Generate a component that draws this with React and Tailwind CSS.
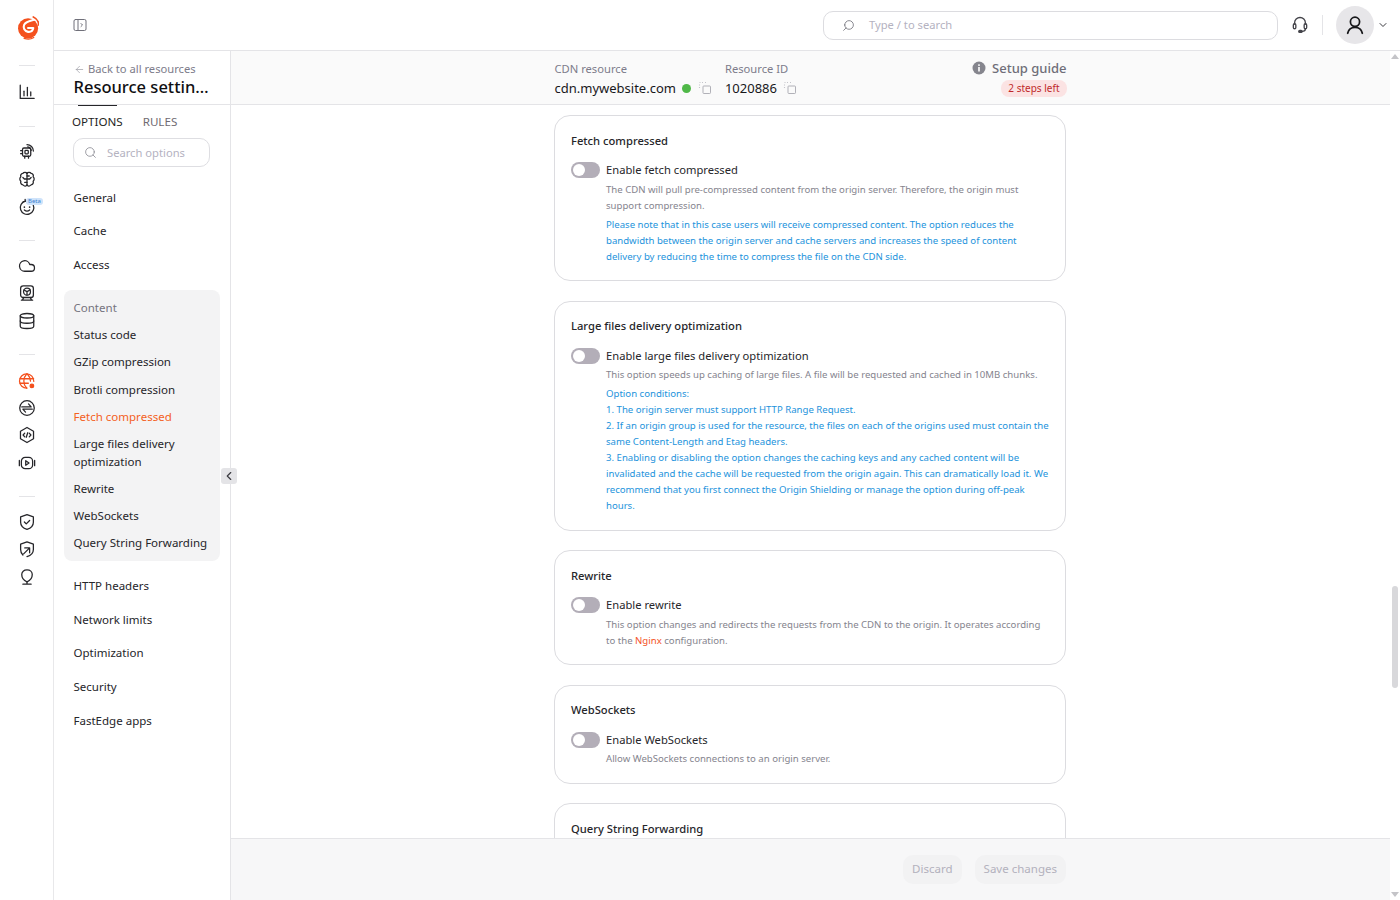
import React from 'react';
import { ArrowLeft, ChevronDown, ChevronLeft, Search, Cloud, Database } from 'lucide-react';

const Svg = ({ className = 'w-[18px] h-[18px] text-[#26262a]', children }) => (
  <svg viewBox="0 0 24 24" fill="none" stroke="currentColor" strokeWidth="1.7" strokeLinecap="round" strokeLinejoin="round" className={className}>
    {children}
  </svg>
);

const Logo = () => (
  <svg viewBox="0 0 24 28" className="w-[21px] h-[25px] ml-[4px]">
    <circle cx="11.500" cy="15" r="11.500" fill="#f4511e" />
    <path d="M19.500 4.500C17 6.500 9.500 6 7 11c-1.500 3.500.5 7.500 4.500 8 3 .3 5.500-1.500 6-4.500h-6" fill="none" stroke="#fff" strokeWidth="2.400" strokeLinecap="round" strokeLinejoin="round" />
    <path d="M17.500 2c3.500 1.500 6 4.500 6.200 9" fill="none" stroke="#f4511e" strokeWidth="2" strokeLinecap="round" />
    <path d="M7 26.500c3.500 1.200 8 1 11-1" fill="none" stroke="#f4511e" strokeWidth="1.500" strokeLinecap="round" />
  </svg>
);

const IconChart = () => (
  <Svg><path d="M3 3v17.500h18.500" /><path d="M8 11v6" /><path d="M12.500 6v11" /><path d="M17 12v5" /></Svg>
);
const IconChip = () => (
  <Svg>
    <rect x="6" y="8" width="11" height="11" rx="2" />
    <rect x="9.300" y="11.300" width="4.400" height="4.400" rx="1" />
    <path d="M3.500 11.500h2.500M3.500 15.500h2.500M9 21.500V19M14 21.500V19" />
    <path d="M12 3.500a8.500 8.500 0 0 1 8.500 8.500M13 6.400a5.600 5.600 0 0 1 4.600 4.600" />
  </Svg>
);
const IconBrain = () => (
  <Svg>
    <path d="M12 4.500v16" />
    <path d="M12 4.500C11 2.800 7.800 2.500 6.500 4.500 4 4.800 3 7 3.800 9 2 10.500 2 13.500 3.800 15c-.8 2.200.4 4.500 2.700 4.700 1.300 2 4.500 2.300 5.500.300" />
    <path d="M12 4.500c1-1.700 4.200-2 5.500 0 2.500.3 3.500 2.500 2.700 4.500 1.800 1.500 1.800 4.500 0 6 .8 2.200-.4 4.500-2.700 4.700-1.300 2-4.500 2.300-5.500.300" />
    <path d="M12 12H8.500L6.500 10M12 12h3.500l2-2M12 16.500H9M12 8h3" />
  </Svg>
);
const IconBeta = () => (
  <Svg>
    <path d="M9.500 4.200a9 9 0 1 0 10.800 5" />
    <path d="M9.500 1.800l.3 2.600-2.600.4" />
    <path d="M8.500 12v.2M15.500 12v.2" strokeWidth="2.200" />
    <path d="M8.500 16c2 1.600 5 1.600 7 0" />
  </Svg>
);
const IconMonitor = () => (
  <Svg>
    <rect x="3.500" y="2.500" width="17" height="15.500" rx="3.500" />
    <circle cx="12" cy="10.200" r="4.600" />
    <path d="M12 10.200v4.600M12 10.200l-4-2.200M12 10.200l4-2.200" />
    <path d="M6 21.500l1.500-3.500M18 21.500L16.500 18M4.500 21.500h15" />
  </Svg>
);
const IconGlobePin = () => (
  <Svg className="w-[18px] h-[18px] text-[#f4511e]">
    <path d="M21 12.500A9.500 9.500 0 1 0 12 21.500" />
    <path d="M2.800 9h18M2.800 15h11" />
    <path d="M11.500 2.600C6.500 8 6.500 16 11.500 21.400M12.500 2.600c2.800 3 4 6.200 4.200 9.600" />
    <circle cx="18.500" cy="18.500" r="2.400" fill="currentColor" />
  </Svg>
);
const IconSwap = () => (
  <Svg>
    <circle cx="12" cy="12" r="9.700" />
    <path d="M5 10.500h12.500l-3.500-4" />
    <path d="M19 13.500H6.500l3.500 4" />
  </Svg>
);
const IconCode = () => (
  <Svg>
    <path d="M12 2l8.700 5v10L12 22l-8.700-5V7z" />
    <path d="M9 9.500L6.800 12 9 14.500M15 9.500l2.200 2.500-2.200 2.500M13 9l-2 6" />
  </Svg>
);
const IconVideo = () => (
  <Svg>
    <rect x="4.500" y="4.500" width="15" height="15" rx="5" />
    <path d="M1.800 8.500v7M22.200 8.500v7" />
    <path d="M10.300 9l4.400 3-4.400 3z" />
  </Svg>
);
const IconShield = () => (
  <Svg>
    <path d="M12 2.200l8.500 3v7c0 4.800-3.600 8-8.500 9.600-4.900-1.600-8.500-4.800-8.500-9.600v-7z" />
    <path d="M8.500 12l2.500 2.500 4.500-4.500" />
  </Svg>
);
const IconShieldArrow = () => (
  <Svg>
    <path d="M6.500 20C4.500 18 3.500 15.500 3.500 12.500v-7l8.500-3 8.500 3v7c0 4.800-3.600 8-8.500 9.600" />
    <path d="M7.500 18.500l7-7M9 10.500h6.500V17" />
  </Svg>
);
const IconPin = () => (
  <Svg>
    <path d="M12 2.500c-4.200 0-7 2.500-7 6.300 0 4.500 3.200 8.200 7 9.700 3.800-1.500 7-5.200 7-9.700 0-3.800-2.800-6.300-7-6.300z" />
    <path d="M12 18.500v3M6.500 21.500h11" />
  </Svg>
);
const PanelIcon = () => (
  <svg viewBox="0 0 14 14" fill="none" stroke="#70707a" strokeWidth="1" strokeLinejoin="round" strokeLinecap="round" className="w-[14px] h-[14px]">
    <rect x="1" y="1.500" width="12" height="11" rx="1.500" />
    <path d="M5 1.500v11" />
    <path d="M8 5.500L9.500 7 8 8.500" />
  </svg>
);
const Headset = () => (
  <svg viewBox="0 0 24 24" fill="none" stroke="#44444a" strokeWidth="1.600" strokeLinecap="round" className="w-[20px] h-[20px]">
    <path d="M5.500 11V9.500a6.500 6.500 0 0 1 13 0V11" />
    <path d="M18.500 16.500c0 2-1.500 3.200-4 3.200" />
    <rect x="4" y="10.500" width="3" height="6" rx="1.500" />
    <rect x="17" y="10.500" width="3" height="6" rx="1.500" />
    <rect x="10.500" y="18.500" width="4" height="2.400" rx="1.200" fill="#44444a" />
  </svg>
);
const User = () => (
  <svg viewBox="0 0 24 24" fill="none" stroke="#18181b" strokeWidth="1.900" strokeLinecap="round" className="w-[22px] h-[22px]">
    <circle cx="12" cy="8.500" r="5" />
    <path d="M4 21c.8-4 4-6.500 8-6.500s7.200 2.500 8 6.500" />
  </svg>
);
const CopyIcon = () => (
  <svg viewBox="0 0 14 14" fill="none" stroke="#a8a8b0" strokeWidth="0.900" className="w-[14px] h-[14px]">
    <rect x="5" y="5" width="7.500" height="7.500" rx="0.800" />
    <path d="M1.500 1.500h1M4 1.500h1M7 1.500h1M1.500 3.500v1M1.500 6v1" stroke="#c4c4ca" strokeWidth="1.100" />
  </svg>
);
const InfoDot = () => (
  <svg viewBox="0 0 14 14" className="w-[14px] h-[14px] mr-[6px]">
    <circle cx="7" cy="7" r="6.500" fill="#85858d" />
    <rect x="6.200" y="6" width="1.600" height="4.500" fill="#fff" />
    <rect x="6.200" y="3.300" width="1.600" height="1.600" fill="#fff" />
  </svg>
);

const Divider = ({ className }) => <div className={`w-4 h-px bg-[#e4e4e7] shrink-0 ${className}`} />;
const RailIcon = ({ children, className = '' }) => (
  <div className={`relative w-[20px] h-[20px] flex items-center justify-center shrink-0 ${className}`}>{children}</div>
);

const Rail = () => (
  <aside className="w-[54px] shrink-0 h-full border-r border-[#e8e8ea] bg-white flex flex-col items-center pt-[15px]">
    <Logo />
    <Divider className="mt-[25px]" />
    <RailIcon className="mt-[16px]"><IconChart /></RailIcon>
    <Divider className="mt-[24px]" />
    <RailIcon className="mt-[14px]"><IconChip /></RailIcon>
    <RailIcon className="mt-[7.500px]"><IconBrain /></RailIcon>
    <RailIcon className="mt-[8px]">
      <IconBeta />
      <span className="absolute left-[9.500px] top-[1.500px] px-[2px] h-[7px] leading-[7px] text-[6px] rounded-[3px] bg-[#cfe3fa] text-[#3b7fd0]">Beta</span>
    </RailIcon>
    <Divider className="mt-[23px]" />
    <RailIcon className="mt-[15px]"><Cloud className="w-[18px] h-[18px] text-[#26262a]" strokeWidth={1.7} /></RailIcon>
    <RailIcon className="mt-[7px]"><IconMonitor /></RailIcon>
    <RailIcon className="mt-[8px]"><Database className="w-[18px] h-[18px] text-[#26262a]" strokeWidth={1.7} /></RailIcon>
    <Divider className="mt-[23px]" />
    <RailIcon className="mt-[16px]"><IconGlobePin /></RailIcon>
    <RailIcon className="mt-[7px]"><IconSwap /></RailIcon>
    <RailIcon className="mt-[7px]"><IconCode /></RailIcon>
    <RailIcon className="mt-[8px]"><IconVideo /></RailIcon>
    <Divider className="mt-[23px]" />
    <RailIcon className="mt-[15px]"><IconShield /></RailIcon>
    <RailIcon className="mt-[7px]"><IconShieldArrow /></RailIcon>
    <RailIcon className="mt-[8px]"><IconPin /></RailIcon>
  </aside>
);

const TopBar = () => (
  <header className="h-[51px] shrink-0 border-b border-[#e4e4e7] bg-white flex items-center pl-[19px] pr-[11px]">
    <PanelIcon />
    <div className="ml-auto w-[455px] h-[29px] rounded-[10px] border border-[#dcdce0] flex items-center pl-[18px]">
      <Search className="w-[13px] h-[13px] text-[#6f6f78] -scale-x-100" strokeWidth={1.500} />
      <span className="ml-[14px] pt-px text-[11.200px] text-[#b4b2bf]">Type / to search</span>
    </div>
    <div className="ml-[12px]"><Headset /></div>
    <div className="ml-[12px] w-px h-[20px] bg-[#e4e4e7]" />
    <div className="ml-[13px] w-[38px] h-[38px] rounded-full bg-[#e7e6e9] flex items-center justify-center"><User /></div>
    <ChevronDown className="ml-[3px] w-[12px] h-[12px] text-[#3a3a40]" strokeWidth={2} />
  </header>
);

const NavItem = ({ children, className = '' }) => (
  <div className={`px-[19.500px] text-[11.520px] leading-[18px] text-[#26262a] ${className}`}>{children}</div>
);
const SubItem = ({ children, className = 'text-[#26262a]' }) => (
  <div className={`pl-[9.500px] pr-1 text-[11.520px] leading-[18px] ${className}`}>{children}</div>
);

const SidePanel = () => (
  <aside className="relative w-[177px] shrink-0 h-full border-r border-[#e4e4e7] bg-white flex flex-col">
    <div className="h-[54px] shrink-0 pl-[19.500px] pt-[11px] border-b border-[#e4e4e7]">
      <div className="flex items-center text-[11.200px] leading-[14px] text-[#7d7c8a]">
        <ArrowLeft className="w-[11px] h-[11px] mr-[3.500px] text-[#9a9aa3]" strokeWidth={1.500} />
        Back to all resources
      </div>
      <div className="text-[16.500px] leading-[22px] font-medium text-[#0f0f12] truncate w-[137px]">Resource settings</div>
    </div>
    <div className="relative flex items-center gap-[20px] pl-[18px] h-[33px] text-[11.600px] shrink-0">
      <span className="text-[#1f1f24]">OPTIONS</span>
      <span className="text-[#6f6a72]">RULES</span>
      <div className="absolute left-[24px] top-0 w-[39px] h-px bg-[#26262a]" />
    </div>
    <div className="ml-[19px] w-[137px] h-[29px] rounded-[10px] border border-[#dedee2] flex items-center pl-[10px] shrink-0">
      <Search className="w-[13px] h-[13px] text-[#8a8a92]" strokeWidth={1.500} />
      <span className="ml-[10px] pt-px text-[11.200px] text-[#b4b2bf]">Search options</span>
    </div>
    <div className="mt-[22px] flex flex-col gap-[15.300px]">
      <NavItem>General</NavItem>
      <NavItem>Cache</NavItem>
      <NavItem>Access</NavItem>
    </div>
    <div className="mt-[16px] mx-[10px] rounded-[8px] bg-[#f3f3f4] pt-[9.500px] pb-[8.700px] flex flex-col gap-[9.150px]">
      <SubItem className="text-[#76747f]">Content</SubItem>
      <SubItem>Status code</SubItem>
      <SubItem>GZip compression</SubItem>
      <SubItem>Brotli compression</SubItem>
      <SubItem className="text-[#f4611e]">Fetch compressed</SubItem>
      <SubItem>Large files delivery optimization</SubItem>
      <SubItem>Rewrite</SubItem>
      <SubItem>WebSockets</SubItem>
      <SubItem>Query String Forwarding</SubItem>
    </div>
    <div className="mt-[16px] flex flex-col gap-[15.750px]">
      <NavItem>HTTP headers</NavItem>
      <NavItem>Network limits</NavItem>
      <NavItem>Optimization</NavItem>
      <NavItem>Security</NavItem>
      <NavItem>FastEdge apps</NavItem>
    </div>
    <button className="absolute left-[167px] top-[417px] w-[16px] h-[16px] rounded-[3px] bg-[#e4e4e7] flex items-center justify-center">
      <ChevronLeft className="w-[14px] h-[14px] text-[#3a3a40]" strokeWidth={2} />
    </button>
  </aside>
);

const ResourceBar = () => (
  <div className="h-[54px] shrink-0 border-b border-[#e4e4e7] bg-[#fafafa]">
    <div className="w-[512px] mx-auto flex pt-[11px]">
      <div>
        <div className="text-[11.200px] leading-[14px] text-[#7d7c8a]">CDN resource</div>
        <div className="mt-[2px] flex items-center text-[13px] leading-[20px] text-[#18181b]">
          cdn.mywebsite.com
          <span className="ml-[6px] w-[9px] h-[9px] rounded-full bg-[#4fb848]" />
          <span className="ml-[7px]"><CopyIcon /></span>
        </div>
      </div>
      <div className="ml-[13px]">
        <div className="text-[11.200px] leading-[14px] text-[#7d7c8a]">Resource ID</div>
        <div className="mt-[2px] flex items-center text-[13px] leading-[20px] text-[#18181b]">
          1020886
          <span className="ml-[6px]"><CopyIcon /></span>
        </div>
      </div>
      <div className="ml-auto flex flex-col items-end -mt-px">
        <div className="flex items-center text-[13px] leading-[14px] font-medium text-[#6f6e78]">
          <InfoDot />
          Setup guide
        </div>
        <div className="mt-[5px] h-[17px] px-[7px] rounded-[8px] bg-[#fbe3e3] text-[10px] leading-[17px] text-[#c0282a]">2 steps left</div>
      </div>
    </div>
  </div>
);

const Toggle = () => (
  <div className="w-[29px] h-[16px] rounded-full bg-[#b3aeb8] p-[2px] shrink-0">
    <div className="w-[12px] h-[12px] rounded-full bg-white" />
  </div>
);

// nudge: cards that land on a fractional y, keeps title and body lines on the same pixel as the design
const Card = ({ title, label, nudge = false, className = '', children }) => (
  <section className={`w-[512px] shrink-0 rounded-[16px] border border-[#dcdce0] bg-white px-[16px] pt-[16px] ${className}`}>
    <h3 className={`text-[11.200px] leading-[18px] font-medium text-[#26262a] ${nudge ? '-mt-[0.400px]' : ''}`}>{title}</h3>
    {label && (
      <div className={`flex items-center gap-[6px] ${nudge ? 'mt-[12.400px]' : 'mt-[12px]'}`}>
        <Toggle />
        <span className="text-[11.200px] leading-[16px] text-[#26262a]">{label}</span>
      </div>
    )}
    {children && <div className={`ml-[35px] text-[9.600px] leading-[16px] text-[#85848e] ${nudge ? 'mt-[3.600px] mb-[0.400px]' : 'mt-[4px]'}`}>{children}</div>}
  </section>
);

const Note = ({ children, className = '' }) => <div className={`text-[#1d93dc] ${className}`}>{children}</div>;

const Content = () => (
  <div className="flex-1 min-h-0 overflow-hidden flex flex-col items-center gap-[19.600px] pt-[10px] pr-px">
    <Card title="Fetch compressed" label="Enable fetch compressed" className="pb-[15px]">
      <div>The CDN will pull pre-compressed content from the origin server. Therefore, the origin must support compression.</div>
      <Note className="mt-[3px]">Please note that in this case users will receive compressed content. The option reduces the bandwidth between the origin server and cache servers and increases the speed of content delivery by reducing the time to compress the file on the CDN side.</Note>
    </Card>
    <Card title="Large files delivery optimization" label="Enable large files delivery optimization" nudge className="pb-[15px]">
      <div>This option speeds up caching of large files. A file will be requested and cached in 10MB chunks.</div>
      <Note className="mt-[3px]">
        <div>Option conditions:</div>
        <div>1. The origin server must support HTTP Range Request.</div>
        <div>2. If an origin group is used for the resource, the files on each of the origins used must contain the same Content-Length and Etag headers.</div>
        <div>3. Enabling or disabling the option changes the caching keys and any cached content will be invalidated and the cache will be requested from the origin again. This can dramatically load it. We recommend that you first connect the Origin Shielding or manage the option during off-peak hours.</div>
      </Note>
    </Card>
    <Card title="Rewrite" label="Enable rewrite" className="pb-[15px]">
      <div>This option changes and redirects the requests from the CDN to the origin. It operates according to the <span className="text-[#f4511e]">Nginx</span> configuration.</div>
    </Card>
    <Card title="WebSockets" label="Enable WebSockets" nudge className="pb-[15px]">
      <div>Allow WebSockets connections to an origin server.</div>
    </Card>
    <Card title="Query String Forwarding" className="pb-[60px]" />
  </div>
);

const Footer = () => (
  <footer className="h-[62px] shrink-0 border-t border-[#e4e4e7] bg-[#f7f7f8] pr-px">
    <div className="w-[512px] h-full mx-auto flex items-center justify-end gap-[12.500px] pb-px">
      <button className="h-[29px] px-[9.500px] rounded-[10px] bg-[#f2f2f3] text-[11.520px] text-[#b3b1bd]">Discard</button>
      <button className="h-[29px] px-[9px] rounded-[10px] bg-[#f2f2f3] text-[11.520px] text-[#b3b1bd]">Save changes</button>
    </div>
  </footer>
);

const Scrollbar = () => (
  <div className="w-[10px] shrink-0 h-full bg-white flex flex-col items-center">
    <div className="mt-[3px] w-0 h-0 border-x-[4px] border-x-transparent border-b-[5px] border-b-[#c4c4c8]" />
    <div className="mt-[527px] w-[6px] h-[102px] rounded-full bg-[#d8d8db]" />
    <div className="mt-auto mb-[3px] w-0 h-0 border-x-[4px] border-x-transparent border-t-[5px] border-t-[#c4c4c8]" />
  </div>
);

export default function App() {
  return (
    <div className="w-[1400px] h-[900px] overflow-hidden flex bg-white font-['Noto_Sans',sans-serif]">
      <Rail />
      <div className="flex-1 min-w-0 flex flex-col">
        <TopBar />
        <div className="flex-1 min-h-0 flex">
          <SidePanel />
          <main className="flex-1 min-w-0 flex flex-col">
            <ResourceBar />
            <Content />
            <Footer />
          </main>
          <Scrollbar />
        </div>
      </div>
    </div>
  );
}
